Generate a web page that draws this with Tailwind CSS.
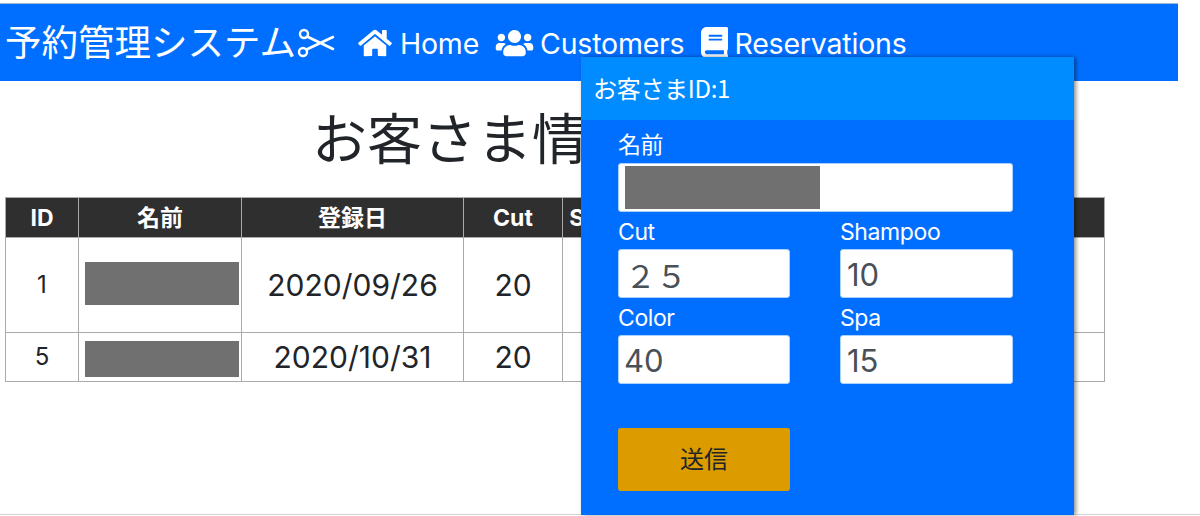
<!DOCTYPE html>
<html lang="ja">
<head>
    <meta charset="UTF-8">
    <title>予約管理システム</title>
    <script src="https://cdn.jsdelivr.net/npm/@tailwindcss/browser@4"></script>
</head>
<body class="bg-white overflow-hidden h-[516px] relative text-[#212529] font-['Inter','Noto_Sans_CJK_JP',sans-serif]">
    <!-- Navigation -->
    <div class="pt-[3px]">
        <nav class="w-[1178px] h-[78px] bg-[#006fff] border-t border-[#9db8d8] flex items-center text-white pl-[5px]">
            <span class="text-[36.5px] leading-none mb-[3px] font-['Noto_Sans_CJK_JP',sans-serif] w-[293px] whitespace-nowrap">予約管理システム</span>
            <svg class="w-[38px] h-[30px] ml-[-1px]" viewBox="0 0 38 30" fill="none" stroke="white">
                <circle cx="7" cy="6" r="4" stroke-width="2.4"/>
                <circle cx="6" cy="24" r="4" stroke-width="2.4"/>
                <path d="M10 8.5 L36 21 M9.5 21.5 L36 9" stroke-width="2.6" stroke-linecap="round"/>
            </svg>
            <a class="flex items-center ml-[23px] text-[28.5px] tracking-[-0.2px] pt-[3px]">
                <svg class="w-[34px] h-[30px] mr-[8px] mt-[-3px]" viewBox="0 0 576 512" fill="white"><path d="M280.37 148.26L96 300.11V464a16 16 0 0 0 16 16l112.06-.29a16 16 0 0 0 15.92-16V368a16 16 0 0 1 16-16h64a16 16 0 0 1 16 16v95.64a16 16 0 0 0 16 16.05L464 480a16 16 0 0 0 16-16V300L295.67 148.26a12.19 12.19 0 0 0-15.3 0zM571.6 251.47L488 182.56V44.05a12 12 0 0 0-12-12h-56a12 12 0 0 0-12 12v72.61L318.47 43a48 48 0 0 0-61 0L4.34 251.47a12 12 0 0 0-1.6 16.9l25.5 31A12 12 0 0 0 45.15 301l235.22-193.74a12.19 12.19 0 0 1 15.3 0L530.9 301a12 12 0 0 0 16.9-1.6l25.5-31a12 12 0 0 0-1.7-16.93z"/></svg>
                Home
            </a>
            <a class="flex items-center ml-[16px] text-[28.5px] tracking-[-0.2px] pt-[3px]">
                <svg class="w-[39px] h-[30px] mr-[6px] mt-[-3px]" viewBox="0 0 640 512" fill="white"><path d="M96 224c35.3 0 64-28.7 64-64s-28.7-64-64-64-64 28.7-64 64 28.7 64 64 64zm448 0c35.3 0 64-28.7 64-64s-28.7-64-64-64-64 28.7-64 64 28.7 64 64 64zm32 32h-64c-17.6 0-33.5 7.1-45.1 18.6 40.3 22.1 68.9 62 75.1 109.4h66c17.7 0 32-14.3 32-32v-32c0-35.3-28.7-64-64-64zm-256 0c61.9 0 112-50.1 112-112S381.9 32 320 32 208 82.1 208 144s50.1 112 112 112zm76.8 32h-8.3c-20.8 10-43.9 16-68.5 16s-47.6-6-68.5-16h-8.3C179.6 288 128 339.6 128 403.2V432c0 26.5 21.5 48 48 48h288c26.5 0 48-21.5 48-48v-28.8c0-63.6-51.6-115.2-115.2-115.2zm-223.7-13.4C161.5 263.1 145.6 256 128 256H64c-35.3 0-64 28.7-64 64v32c0 17.7 14.3 32 32 32h65.9c6.3-47.4 34.9-87.3 75.2-109.4z"/></svg>
                Customers
            </a>
            <a class="flex items-center ml-[17px] text-[28.5px] tracking-[-0.2px] pt-[3px]">
                <svg class="w-[27px] h-[31px] mr-[6px] mt-[-3px]" viewBox="0 0 448 512" fill="white" preserveAspectRatio="none"><path d="M448 360V24c0-13.3-10.7-24-24-24H96C43 0 0 43 0 96v320c0 53 43 96 96 96h328c13.3 0 24-10.7 24-24v-16c0-7.5-3.5-14.3-8.9-18.7-4.2-15.4-4.2-59.3 0-74.7 5.4-4.3 8.9-11.1 8.9-18.6zM128 134c0-3.3 2.7-6 6-6h212c3.3 0 6 2.7 6 6v20c0 3.3-2.7 6-6 6H134c-3.3 0-6-2.7-6-6v-20zm0 64c0-3.3 2.7-6 6-6h212c3.3 0 6 2.7 6 6v20c0 3.3-2.7 6-6 6H134c-3.3 0-6-2.7-6-6v-20zm253.4 250H96c-17.7 0-32-14.3-32-32 0-17.6 14.4-32 32-32h285.4c-1.9 17.1-1.9 46.9 0 64z"/></svg>
                Reservations
            </a>
        </nav>
    </div>

    <!-- Page title -->
    <h1 class="h-[116px] pl-[312px] pt-[21px] text-[55px] leading-[66px] whitespace-nowrap font-['Noto_Sans_CJK_JP',sans-serif] font-normal">お客さま情報</h1>

    <!-- Customer table -->
    <table class="ml-[5px] w-[1100px] table-fixed border-collapse text-center text-[#212529] text-[30px]">
        <colgroup>
            <col class="w-[73px]"><col class="w-[163px]"><col class="w-[222px]"><col class="w-[99px]"><col class="w-[120px]"><col class="w-[120px]"><col class="w-[120px]"><col>
        </colgroup>
        <thead>
            <tr class="h-[40px] bg-[#2f2f2f] text-white text-[23px] font-bold">
                <th class="border border-[#aaa] pt-[2px]">ID</th>
                <th class="border border-[#aaa] pt-[2px]">名前</th>
                <th class="border border-[#aaa] pt-[2px]">登録日</th>
                <th class="border border-[#aaa] pt-[2px]">Cut</th>
                <th class="border border-[#aaa] pt-[2px]">Shampoo</th>
                <th class="border border-[#aaa] pt-[2px]">Color</th>
                <th class="border border-[#aaa] pt-[2px]">Spa</th>
                <th class="border border-[#aaa]"></th>
            </tr>
        </thead>
        <tbody>
            <tr class="h-[95px]">
                <td class="border border-[#aaa] text-[24px]">1</td>
                <td class="border border-[#aaa] pl-[6px] pb-[4px]"><div class="w-[154px] h-[43px] bg-[#707070]"></div></td>
                <td class="border border-[#aaa]">2020/09/26</td>
                <td class="border border-[#aaa]">20</td>
                <td class="border border-[#aaa]">10</td>
                <td class="border border-[#aaa]">40</td>
                <td class="border border-[#aaa]">15</td>
                <td class="border border-[#aaa]"></td>
            </tr>
            <tr class="h-[49px]">
                <td class="border border-[#aaa] text-[24px]">5</td>
                <td class="border border-[#aaa] pl-[6px] pt-[4px]"><div class="w-[154px] h-[36px] bg-[#707070]"></div></td>
                <td class="border border-[#aaa]">2020/10/31</td>
                <td class="border border-[#aaa]">20</td>
                <td class="border border-[#aaa]">10</td>
                <td class="border border-[#aaa]">40</td>
                <td class="border border-[#aaa]">15</td>
                <td class="border border-[#aaa]"></td>
            </tr>
        </tbody>
    </table>

    <!-- Bottom rule -->
    <div class="absolute left-0 right-0 top-[514px] h-px bg-[#d5d5d5]"></div>

    <!-- Modal -->
    <div class="absolute left-[581px] top-[57px] w-[493px] h-[458px] bg-[#006fff] rounded-t-[3px] shadow-[2px_0_4px_rgba(0,0,0,0.45)] text-white">
        <div class="h-[63px] bg-[#008cff] pl-[12px] pb-[2px] flex items-center text-[24px] tracking-[-0.3px] font-['Noto_Sans_CJK_JP',sans-serif]">お客さまID:1</div>
        <div class="pl-[37px] pt-[9px] text-[23px] leading-[30px] tracking-[-0.4px]">
            <label class="block h-[34px] pt-[1px]">名前</label>
            <div class="w-[395px] h-[49px] bg-white rounded-[3px] border border-[#a9d2ff] pl-[6px] flex items-center">
                <div class="w-[195px] h-[43px] bg-[#707070]"></div>
            </div>
            <div class="grid grid-cols-[172px_173px] gap-x-[50px] mt-[3px]">
                <div>
                    <label class="block h-[34px] pt-[2px]">Cut</label>
                    <input class="w-full h-[49px] bg-white rounded-[3px] border border-[#a9d2ff] pl-[6px] pt-[2px] text-[#495057] text-[31px] tracking-normal" value="２５">
                </div>
                <div>
                    <label class="block h-[34px] pt-[2px]">Shampoo</label>
                    <input class="w-full h-[49px] bg-white rounded-[3px] border border-[#a9d2ff] pl-[6px] pt-[2px] text-[#495057] text-[31px] tracking-normal" value="10">
                </div>
                <div class="mt-[3px]">
                    <label class="block h-[34px] pt-[2px]">Color</label>
                    <input class="w-full h-[49px] bg-white rounded-[3px] border border-[#a9d2ff] pl-[5px] pt-[2px] text-[#495057] text-[31px] tracking-normal" value="40">
                </div>
                <div class="mt-[3px]">
                    <label class="block h-[34px] pt-[2px]">Spa</label>
                    <input class="w-full h-[49px] bg-white rounded-[3px] border border-[#a9d2ff] pl-[6px] pt-[2px] text-[#495057] text-[31px] tracking-normal" value="15">
                </div>
            </div>
            <button class="block mt-[44px] w-[172px] h-[63px] bg-[#dc9c00] rounded-[3px] pb-[3px] text-[#212529] text-[24px] tracking-normal font-['Noto_Sans_CJK_JP',sans-serif]">送信</button>
        </div>
    </div>
</body>
</html>
